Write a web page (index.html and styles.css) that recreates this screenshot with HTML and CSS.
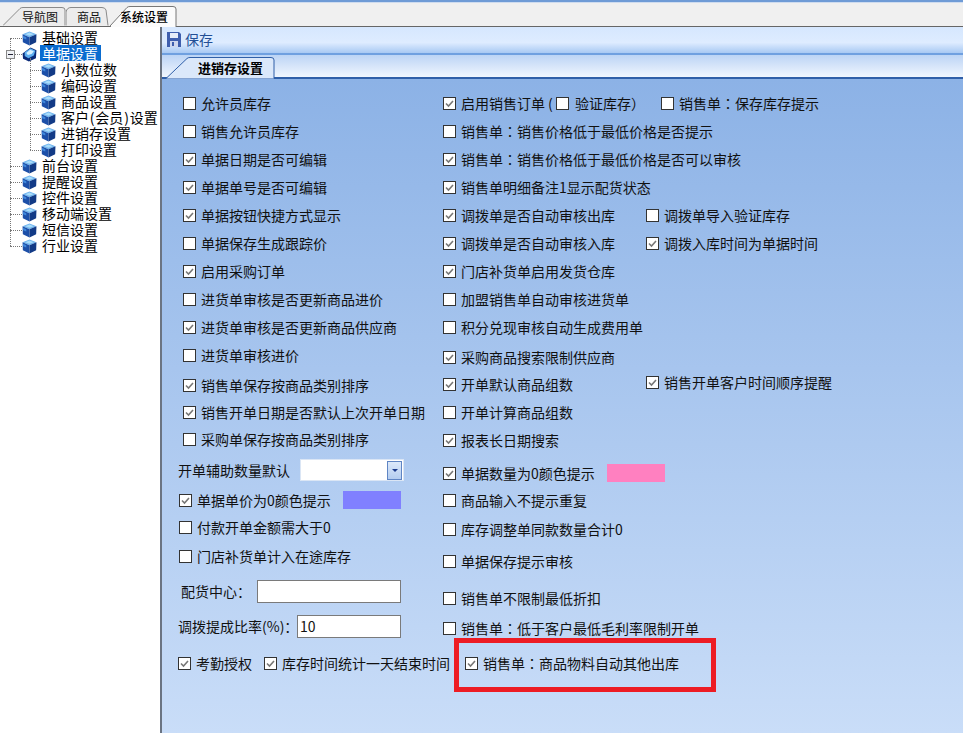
FILE: index.html
```html
<!DOCTYPE html>
<html lang="zh-CN">
<head>
<meta charset="utf-8">
<title>系统设置</title>
<link rel="stylesheet" href="styles.css">
</head>
<body>
<svg class="defs" width="0" height="0">
  <defs>
    <symbol id="cube" viewBox="0 0 14 14">
      <path d="M7 0.5 13.5 3 7 5.8 0.5 3z" fill="#6fb4ee"/>
      <path d="M0.5 3 7 5.8V13.5L0.8 10.6z" fill="#1c4fa8"/>
      <path d="M13.5 3 7 5.8V13.5L13.2 10.6z" fill="#123a86"/>
      <path d="M3 3 7 1.5 11 3 7 4.5z" fill="#a9dcfa"/>
      <path d="M1 4.5 4 5.8V8L1 6.8z" fill="#3f88dc"/>
    </symbol>
    <symbol id="cube-on" viewBox="0 0 14 14">
      <path d="M8 0.5 13.5 3 13 10.6 6.5 13.5 1 11 0.500 6z" fill="#0a2a78"/>
      <path d="M8 1.200 12.500 3.500 11 8 6 10.500 2.500 8.500 2.500 5z" fill="#5eaef0"/>
      <path d="M7.500 2.500 11 4 9 6.500 5.500 7.500 4 5.500z" fill="#d6f0ff"/>
    </symbol>
    <symbol id="check" viewBox="0 0 11 11">
      <path d="M2 5.5 4.5 8 9 3" fill="none" stroke="#777" stroke-width="1.6"/>
    </symbol>
  </defs>
</svg>
<div class="app">
  <div class="stripe"></div>
  <nav class="tabbar">
    <div class="tab tab-a">
      <svg class="tab-shape" width="66" height="19" viewBox="0 0 66 19"><path d="M0 18.5 17 1.5Q18 .5 20 .5H59Q62 .5 62 3V18.5" fill="#ececec" stroke="#8a8a8a"/></svg>
      <span class="tab-label">导航图</span>
    </div>
    <div class="tab tab-b">
      <svg class="tab-shape" width="44" height="19" viewBox="0 0 44 19"><path d="M0 18.5V5Q1 .5 5 .5H36Q39 .5 40 3L42 18.5" fill="#ececec" stroke="#8a8a8a"/></svg>
      <span class="tab-label">商品</span>
    </div>
    <div class="tab tab-c">
      <svg class="tab-shape" width="68" height="21" viewBox="0 0 68 21"><path d="M0 20 17 1.5Q18 .5 20 .5H63Q66 .5 66 3V20.5H0z" fill="#fbfbfb" stroke="#777"/><path d="M1 20.5H65.500" stroke="#fbfbfb"/></svg>
      <span class="tab-label tab-label-on">系统设置</span>
    </div>
  </nav>
  <div class="workspace">
    <aside class="tree-pane">
      <ul class="tree">
        <li class="node"><svg class="cube"><use href="#cube"/></svg><span>基础设置</span></li>
        <li class="node open"><span class="minus"></span><svg class="cube"><use href="#cube-on"/></svg><span class="selected">单据设置</span></li>
        <li class="sub-wrap">
          <ul class="sub">
            <li class="node"><svg class="cube"><use href="#cube"/></svg><span>小数位数</span></li>
            <li class="node"><svg class="cube"><use href="#cube"/></svg><span>编码设置</span></li>
            <li class="node"><svg class="cube"><use href="#cube"/></svg><span>商品设置</span></li>
            <li class="node"><svg class="cube"><use href="#cube"/></svg><span>客户<span class="paren">(</span>会员<span class="paren">)</span>设置</span></li>
            <li class="node"><svg class="cube"><use href="#cube"/></svg><span>进销存设置</span></li>
            <li class="node"><svg class="cube"><use href="#cube"/></svg><span>打印设置</span></li>
          </ul>
        </li>
        <li class="node"><svg class="cube"><use href="#cube"/></svg><span>前台设置</span></li>
        <li class="node"><svg class="cube"><use href="#cube"/></svg><span>提醒设置</span></li>
        <li class="node"><svg class="cube"><use href="#cube"/></svg><span>控件设置</span></li>
        <li class="node"><svg class="cube"><use href="#cube"/></svg><span>移动端设置</span></li>
        <li class="node"><svg class="cube"><use href="#cube"/></svg><span>短信设置</span></li>
        <li class="node"><svg class="cube"><use href="#cube"/></svg><span>行业设置</span></li>
      </ul>
    </aside>
    <main class="main">
      <div class="toolbar">
        <svg class="save-icon" width="14" height="15" viewBox="0 0 14 15">
          <path d="M0 0H12L14 2V15H0z" fill="#3f5fae"/>
          <rect x="3" y="1" width="8" height="5" fill="#e6ecf8"/>
          <rect x="3" y="9" width="8" height="6" fill="#cfd8ee"/>
          <rect x="5" y="10" width="2" height="4" fill="#3f5fae"/>
        </svg>
        <span class="save-text">保存</span>
      </div>
      <div class="strip">
        <div class="page-tab">
          <svg class="page-tab-shape" width="110" height="22" viewBox="0 0 110 22"><path d="M0 21.500 21 1.500Q22 .5 24 .5H105Q108 .5 108 3V21.500" fill="#dbe8fa" stroke="#2f5fa8"/></svg>
          <span class="page-tab-label">进销存设置</span>
        </div>
      </div>
      <div class="panel">
        <div class="col col-left">
          <div class="row in"><label class="ck"><span class="cb"></span>允许员库存</label></div>
          <div class="row in"><label class="ck"><span class="cb"></span>销售允许员库存</label></div>
          <div class="row in"><label class="ck"><span class="cb"><svg><use href="#check"/></svg></span>单据日期是否可编辑</label></div>
          <div class="row in"><label class="ck"><span class="cb"><svg><use href="#check"/></svg></span>单据单号是否可编辑</label></div>
          <div class="row in"><label class="ck"><span class="cb"><svg><use href="#check"/></svg></span>单据按钮快捷方式显示</label></div>
          <div class="row in"><label class="ck"><span class="cb"></span>单据保存生成跟踪价</label></div>
          <div class="row in"><label class="ck"><span class="cb"><svg><use href="#check"/></svg></span>启用采购订单</label></div>
          <div class="row in"><label class="ck"><span class="cb"></span>进货单审核是否更新商品进价</label></div>
          <div class="row in"><label class="ck"><span class="cb"><svg><use href="#check"/></svg></span>进货单审核是否更新商品供应商</label></div>
          <div class="row in"><label class="ck"><span class="cb"></span>进货单审核进价</label></div>
          <div class="row in g30"><label class="ck"><span class="cb"><svg><use href="#check"/></svg></span>销售单保存按商品类别排序</label></div>
          <div class="row in g27"><label class="ck"><span class="cb"><svg><use href="#check"/></svg></span>销售开单日期是否默认上次开单日期</label></div>
          <div class="row in g27"><label class="ck"><span class="cb"></span>采购单保存按商品类别排序</label></div>
          <div class="row g31">
            <span class="field-label">开单辅助数量默认</span>
            <div class="combo"><span class="combo-btn"><span class="combo-arrow"></span></span></div>
          </div>
          <div class="row g30 swatch-row"><label class="ck ck-left"><span class="cb"><svg><use href="#check"/></svg></span>单据单价为0颜色提示</label><span class="swatch swatch-blue"></span></div>
          <div class="row g27 swatch-row"><label class="ck"><span class="cb"></span>付款开单金额需大于0</label></div>
          <div class="row g29 swatch-row"><label class="ck"><span class="cb"></span>门店补货单计入在途库存</label></div>
          <div class="row g35 input-row"><span class="field-label label-center">配货中心<span class="mid-colon">：</span></span><span class="text-box box-center"></span></div>
          <div class="row g35 input-row"><span class="field-label label-rate">调拨提成比率(%)<span class="mid-colon">：</span></span><span class="text-box box-rate">10</span></div>
          <div class="row g37"><label class="ck ck-auth"><span class="cb"><svg><use href="#check"/></svg></span>考勤授权</label><label class="ck"><span class="cb"><svg><use href="#check"/></svg></span>库存时间统计一天结束时间</label></div>
        </div>
        <div class="col col-mid">
          <div class="row"><label class="ck"><span class="cb"><svg><use href="#check"/></svg></span>启用销售订单<span class="open-paren">(</span></label><label class="ck ck-inner"><span class="cb"></span>验证库存）</label><label class="ck ck-save"><span class="cb"></span>销售单<span class="mid-colon">：</span>保存库存提示</label></div>
          <div class="row"><label class="ck"><span class="cb"></span>销售单<span class="mid-colon">：</span>销售价格低于最低价格是否提示</label></div>
          <div class="row"><label class="ck"><span class="cb"><svg><use href="#check"/></svg></span>销售单<span class="mid-colon">：</span>销售价格低于最低价格是否可以审核</label></div>
          <div class="row"><label class="ck"><span class="cb"><svg><use href="#check"/></svg></span>销售单明细备注1显示配货状态</label></div>
          <div class="row"><label class="ck ck-wide"><span class="cb"><svg><use href="#check"/></svg></span>调拨单是否自动审核出库</label><label class="ck"><span class="cb"></span>调拨单导入验证库存</label></div>
          <div class="row"><label class="ck ck-wide"><span class="cb"><svg><use href="#check"/></svg></span>调拨单是否自动审核入库</label><label class="ck"><span class="cb"><svg><use href="#check"/></svg></span>调拨入库时间为单据时间</label></div>
          <div class="row"><label class="ck"><span class="cb"><svg><use href="#check"/></svg></span>门店补货单启用发货仓库</label></div>
          <div class="row"><label class="ck"><span class="cb"></span>加盟销售单自动审核进货单</label></div>
          <div class="row"><label class="ck"><span class="cb"></span>积分兑现审核自动生成费用单</label></div>
          <div class="row g30"><label class="ck"><span class="cb"><svg><use href="#check"/></svg></span>采购商品搜索限制供应商</label></div>
          <div class="row g27"><label class="ck ck-wide"><span class="cb"><svg><use href="#check"/></svg></span>开单默认商品组数</label><label class="ck ck-up"><span class="cb"><svg><use href="#check"/></svg></span>销售开单客户时间顺序提醒</label></div>
          <div class="row"><label class="ck"><span class="cb"></span>开单计算商品组数</label></div>
          <div class="row"><label class="ck"><span class="cb"><svg><use href="#check"/></svg></span>报表长日期搜索</label></div>
          <div class="row g33 swatch-row"><label class="ck ck-mid"><span class="cb"><svg><use href="#check"/></svg></span>单据数量为0颜色提示</label><span class="swatch swatch-pink"></span></div>
          <div class="row g27"><label class="ck"><span class="cb"></span>商品输入不提示重复</label></div>
          <div class="row g29"><label class="ck"><span class="cb"></span>库存调整单同款数量合计0</label></div>
          <div class="row g32"><label class="ck"><span class="cb"></span>单据保存提示审核</label></div>
          <div class="row g37"><label class="ck"><span class="cb"></span>销售单不限制最低折扣</label></div>
          <div class="row g30"><label class="ck"><span class="cb"></span>销售单<span class="mid-colon">：</span>低于客户最低毛利率限制开单</label></div>
          <div class="row g35 row-marked"><label class="ck"><span class="cb"><svg><use href="#check"/></svg></span>销售单<span class="mid-colon">：</span>商品物料自动其他出库</label></div>
        </div>
        <div class="marker"></div>
      </div>
    </main>
  </div>
</div>
</body>
</html>
```
FILE: styles.css
```css
* { box-sizing: border-box; }
html, body { margin: 0; padding: 0; }
body {
  width: 963px;
  height: 733px;
  overflow: hidden;
  background: #fff;
  font-family: "Noto Sans CJK SC", "Liberation Sans", sans-serif;
  font-size: 14px;
  color: #111;
}
.defs { position: absolute; }
.app { display: flex; flex-direction: column; height: 733px; }
.mid-colon { font-family: "Noto Sans CJK TC", "Noto Sans CJK SC", sans-serif; }
.paren { padding: 0 0.8px; }
.open-paren { margin-left: 3px; width: 7px; }

.stripe { height: 3px; background: #6f9bd6; border-bottom: 1px solid #cfdcef; }
.tabbar {
  height: 24px;
  display: flex;
  align-items: flex-end;
  background: #f0f0f0;
  border-bottom: 1px solid #666;
  padding-left: 3px;
  position: relative;
}
.tab { position: relative; height: 19px; display: flex; align-items: center; font-size: 12px; }
.tab-shape { position: absolute; left: 0; top: 0; }
.tab-label { position: relative; line-height: 18px; }
.tab-a { width: 63px; padding-left: 19px; }
.tab-b { width: 44px; padding-left: 11px; }
.tab-c { width: 68px; height: 21px; margin-bottom: -1px; padding-left: 10px; }
.tab-label-on { font-weight: 500; color: #000; }

.workspace { flex: 1; display: flex; min-height: 0; }
.tree-pane { width: 160px; background: #fff; padding-top: 3px; }
.tree, .sub { list-style: none; margin: 0; padding: 0; position: relative; }
.tree::before {
  content: "";
  position: absolute;
  left: 10px;
  top: 8px;
  bottom: 8px;
  border-left: 1px dotted #777;
}
.sub::before {
  content: "";
  position: absolute;
  left: 30px;
  top: -4px;
  bottom: 8px;
  border-left: 1px dotted #777;
}
.node {
  position: relative;
  height: 16px;
  line-height: 16px;
  padding-left: 22px;
  display: flex;
  align-items: center;
  white-space: nowrap;
  color: #000;
}
.node > span:last-child { position: relative; top: -1px; }
.node::before {
  content: "";
  position: absolute;
  left: 10px;
  width: 12px;
  top: 8px;
  border-top: 1px dotted #777;
}
.sub .node { padding-left: 41px; }
.sub .node::before { left: 30px; width: 11px; }
.cube { width: 15px; height: 15px; margin-right: 5px; flex: none; position: relative; }
.selected {
  background: #0a6cd0;
  color: #fff;
  margin-left: -2px;
  padding: 0 3px 0 2px;
  height: 16px;
}
.minus {
  position: absolute;
  left: 6px;
  top: 4px;
  width: 9px;
  height: 9px;
  background: #eef0f4;
  border: 1px solid #888;
  z-index: 1;
}
.minus::after {
  content: "";
  position: absolute;
  left: 1px;
  right: 1px;
  top: 3px;
  border-top: 1px solid #223;
}

.main {
  flex: 1;
  min-width: 0;
  display: flex;
  flex-direction: column;
  border-left: 2px solid #6b7482;
}
.toolbar {
  height: 28px;
  background: linear-gradient(#d6e7fe 0, #deecff 60%, #a8c9f3 100%);
  border-bottom: 2px solid #6fa0e0;
  display: flex;
  align-items: center;
  padding: 0 0 2px 5px;
  gap: 4px;
}
.save-text { color: #234f96; line-height: 20px; }
.strip {
  height: 24px;
  background: linear-gradient(#bcd4f5 0, #f0f6fe 100%);
  border-bottom: 2px solid #2f5fa8;
  padding-left: 4px;
  display: flex;
  align-items: flex-end;
}
.page-tab {
  position: relative;
  width: 110px;
  height: 22px;
  margin-bottom: -2px;
  display: flex;
  align-items: center;
  padding: 0 0 1px 32px;
}
.page-tab-shape { position: absolute; left: 0; top: 0; }
.page-tab-label { position: relative; font-size: 13px; font-weight: 700; color: #000; line-height: 18px; }

.panel {
  flex: 1;
  position: relative;
  display: flex;
  padding: 14px 0 0 16px;
  background: linear-gradient(#8cb2e6 0, #c9ddf8 100%);
}
.col { display: flex; flex-direction: column; }
.col-left { width: 265px; }
.col-mid { flex: 1; min-width: 0; }

.row {
  height: 20px;
  margin-top: 8px;
  display: flex;
  align-items: center;
  white-space: nowrap;
}
.row:first-child { margin-top: 0; }
.in { padding-left: 5px; }
.g27 { margin-top: 7px; }
.g29 { margin-top: 9px; }
.g30 { margin-top: 10px; }
.g31 { margin-top: 11px; }
.g32 { margin-top: 12px; }
.g33 { margin-top: 13px; }
.g35 { margin-top: 15px; }
.g37 { margin-top: 17px; }
.swatch-row.g27, .swatch-row.g29, .swatch-row.g30 { padding-left: 1px; }

.ck { display: inline-flex; align-items: center; line-height: 20px; color: #111; }
.cb {
  flex: none;
  width: 13px;
  height: 13px;
  margin-right: 5px;
  background: #fff;
  border: 1px solid #333;
  display: inline-block;
}
.cb svg { display: block; width: 11px; height: 11px; }
.ck-left { width: 164px; }
.ck-mid { width: 164px; }
.ck-wide { width: 203px; }
.ck-inner { margin-left: 1px; }
.ck-inner .cb { margin-right: 6px; }
.ck-save { margin-left: 16px; }
.ck-up { margin-bottom: 4px; }
.ck-auth { margin-right: 12px; }

.field-label { line-height: 20px; }
.combo {
  margin-left: 10px;
  width: 104px;
  height: 22px;
  background: #fff;
  border: 1px solid #dbe6f5;
  display: flex;
  justify-content: flex-end;
  align-items: center;
  padding-right: 1px;
}
.combo-btn {
  width: 15px;
  height: 19px;
  background: linear-gradient(#dce9fa, #b4cdf0);
  border: 1px solid #5f85c4;
  display: flex;
  align-items: center;
  justify-content: center;
}
.combo-arrow {
  width: 0;
  height: 0;
  border-left: 3px solid transparent;
  border-right: 3px solid transparent;
  border-top: 3px solid #1a3a8c;
}
.swatch { width: 58px; height: 18px; flex: none; }
.swatch-blue { background: #8080ff; }
.swatch-pink { background: #ff80c0; }

.input-row { justify-content: flex-start; }
.label-center { margin-left: 3px; width: 76px; }
.label-rate { width: 119px; }
.text-box {
  height: 23px;
  background: #fff;
  border: 1px solid #7a7a7a;
  padding-left: 2px;
  line-height: 21px;
  flex: none;
}
.box-center { width: 144px; }
.box-rate { width: 104px; }

.row-marked { padding-left: 22px; }
.marker {
  position: absolute;
  left: 292px;
  top: 559px;
  width: 262px;
  height: 54px;
  border: 5px solid #ed1c24;
}
```
